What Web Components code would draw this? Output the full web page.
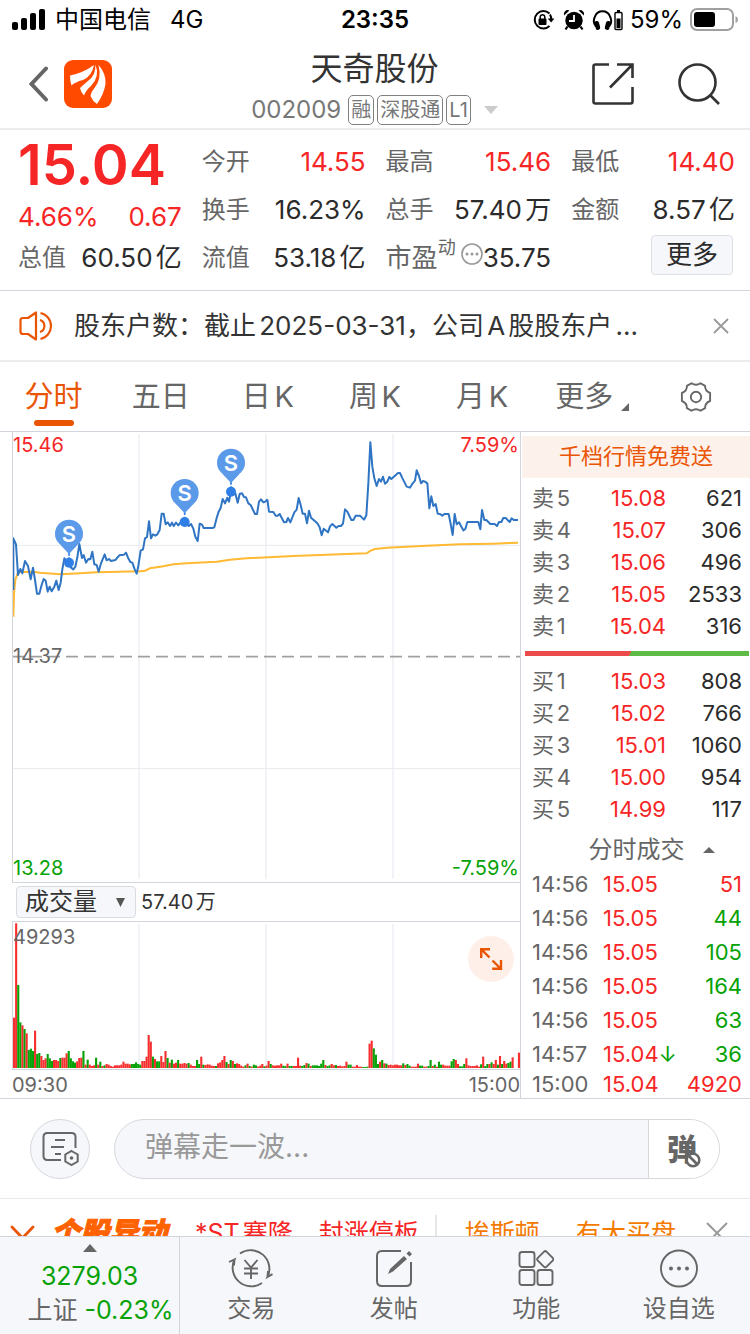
<!DOCTYPE html>
<html lang="zh-CN">
<head>
<meta charset="utf-8">
<meta name="viewport" content="width=device-width, initial-scale=1">
<title>天奇股份 002009</title>
<style>
  :root {
    --up: #f62626;
    --down: #06a206;
    --brand: #ea5504;
    --text: #2b2b2b;
    --muted: #666;
    --line: #d2d5db;
    --soft: #ececec;
    --panel: #f6f7fa;
  }
  body {
    margin: 0;
    height: 100vh;
    display: flex;
    flex-direction: column;
    overflow: hidden;
    background: #fff;
    color: var(--text);
    font-family: Inter, "Noto Sans CJK SC", sans-serif;
    text-autospace: normal;
  }
  main {
    flex: 1;
    min-height: 0;
    overflow: hidden;
  }
</style>
</head>
<body>
<status-bar time="23:35" carrier="中国电信" network="4G" battery="59%"></status-bar>
<main>
  <stock-header code="002009">天奇股份
    <stock-tag slot="tags">融</stock-tag>
    <stock-tag slot="tags">深股通</stock-tag>
    <stock-tag slot="tags">L1</stock-tag>
  </stock-header>
  <quote-panel price="15.04" percent="4.66%" change="0.67">
    <quote-item slot="c1" label="总值">60.50亿</quote-item>
    <quote-item slot="c2" label="今开" tone="up">14.55</quote-item>
    <quote-item slot="c2" label="换手">16.23%</quote-item>
    <quote-item slot="c2" label="流值">53.18亿</quote-item>
    <quote-item slot="c3" label="最高" tone="up">15.46</quote-item>
    <quote-item slot="c3" label="总手">57.40万</quote-item>
    <quote-item slot="c3" label="市盈" sup="动">35.75</quote-item>
    <quote-item slot="c4" label="最低" tone="up">14.40</quote-item>
    <quote-item slot="c4" label="金额">8.57亿</quote-item>
  </quote-panel>
  <notice-bar>股东户数：截止2025-03-31，公司A股股东户...</notice-bar>
  <period-tabs></period-tabs>
  <market-view>
    <time-chart slot="chart"></time-chart>
    <volume-chart slot="chart"></volume-chart>
    <order-book slot="side"></order-book>
    <trade-list slot="side"></trade-list>
  </market-view>
  <comment-bar></comment-bar>
  <mover-ticker>
    <mover-item tone="up" name="*ST赛隆">封涨停板</mover-item>
    <mover-item tone="warn" name="埃斯顿">有大买盘</mover-item>
  </mover-ticker>
</main>
<bottom-nav></bottom-nav>

<script>
const define = (name, html, setup) => {
    const template = document.createElement("template");
    template.innerHTML = html;
    customElements.define(name, class extends HTMLElement {
        connectedCallback() {
            if (this.shadowRoot) return;
            this.attachShadow({ mode: "open" });
            this.shadowRoot.appendChild(template.content.cloneNode(true));
            // [data-text="x"] is filled from the attribute x of the host
            this.shadowRoot.querySelectorAll("[data-text]").forEach((el) => {
                el.textContent = this.getAttribute(el.dataset.text) || "";
            });
            if (setup) setup(this, this.shadowRoot);
        }
    });
};

const BUTTON = `
  button {
    padding: 0;
    border: 0;
    background: none;
    color: inherit;
    font: inherit;
    cursor: pointer;
  }
  svg { display: block; }
`;

define("status-bar", /*html*/`
<style>
  :host {
    display: grid;
    grid-template-columns: 1fr auto 1fr;
    align-items: center;
    height: 40px;
    padding: 0 12px;
    color: #000;
    font-size: 24px;
    line-height: 28px;
    flex: none;
  }
  div { display: flex; align-items: center; }
  .left { gap: 9px; }
  .net { margin-left: 10px; }
  .right { justify-content: flex-end; gap: 7px; }
  svg { display: block; }
  b { font-weight: 600; }
</style>
<div class="left">
  <svg width="34" height="22" viewBox="0 0 34 22"><rect y="13" width="6" height="8" rx="2"/><rect x="9" y="9" width="6" height="12" rx="2"/><rect x="18" y="4" width="6" height="17" rx="2"/><rect x="27" width="6" height="21" rx="2"/></svg>
  <span data-text="carrier"></span>
  <span class="net" data-text="network"></span>
</div>
<b data-text="time"></b>
<div class="right">
  <svg width="24" height="22" viewBox="0 0 24 22" fill="none" stroke="#000" stroke-width="2"><path d="M17.500 4.500A8.700 8.700 0 1 0 17.500 17M18 5.500a8.700 8.700 0 0 1 1.200 5"/><path d="M15.800 9.500h6.600l-3.300 4z" fill="#000" stroke="none"/><rect x="6.500" y="9.500" width="8" height="6.500" rx="1" fill="#000" stroke="none"/><path d="M8.200 10V8a2.300 2.300 0 0 1 4.600 0v2" stroke-width="1.500"/></svg>
  <svg width="22" height="22" viewBox="0 0 22 22"><path d="M1 6.500A4 4 0 0 1 6.500 1.500zM21 6.500a4 4 0 0 0-5.500-5z"/><circle cx="11" cy="11.500" r="8.700"/><path d="M4.500 17.500l-2 3M17.500 17.500l2 3" stroke="#000" stroke-width="2.200"/><path d="M11 6v6H6" fill="none" stroke="#fff" stroke-width="1.800"/></svg>
  <svg width="31" height="22" viewBox="0 0 31 22"><path d="M4 17.500A9 9 0 0 1 3 7.500a8 8 0 0 1 15 0 9 9 0 0 1-1 10" fill="none" stroke="#000" stroke-width="2"/><rect x="3" y="12" width="4.500" height="9" rx="2" transform="rotate(-14 5 16)"/><rect x="13.500" y="12" width="4.500" height="9" rx="2" transform="rotate(14 16 16)"/><rect x="23" y="3.500" width="7" height="17" rx="1" fill="none" stroke="#000" stroke-width="1.400"/><path d="M25 1h3v2h-3zM24.500 9.500h4v9.500h-4z"/></svg>
  <span data-text="battery"></span>
  <svg width="48" height="24" viewBox="0 0 48 24"><rect x="1" y="1" width="42" height="21" rx="6" fill="none" stroke="#a0a0a0" stroke-width="2"/><rect x="4" y="4" width="21" height="15" rx="3"/><path d="M45.500 8v7q2.500-1 2.500-3.500T45.500 8z" fill="#a0a0a0"/></svg>
</div>
`);

define("stock-tag", /*html*/`
<style>
  :host {
    display: block;
    box-sizing: border-box;
    height: 30px;
    padding: 0 2px;
    border: 1px solid #808080;
    border-radius: 5px;
    font-size: 20px;
    line-height: 28px;
  }
</style>
<slot></slot>
`);

define("stock-header", /*html*/`
<style>
  ${BUTTON}
  :host {
    display: grid;
    grid-template-columns: 1fr auto 1fr;
    align-items: center;
    box-sizing: border-box;
    height: 90px;
    padding: 0 30px 0 29px;
    border-bottom: 2px solid var(--soft);
  }
  .left { display: flex; align-items: center; gap: 16px; }
  .right { display: flex; justify-content: flex-end; align-items: center; gap: 44px; }
  .mid { padding-top: 4px; text-align: center; }
  h1 { margin: 0; font-size: 32px; line-height: 48px; font-weight: 400; color: #333; }
  .sub {
    display: flex;
    align-items: center;
    gap: 3px;
    height: 34px;
    color: #777;
    font-size: 24px;
    line-height: 30px;
  }
  .sub > span { margin-right: 4px; }
  .sub svg { margin-left: 10px; }
</style>
<div class="left">
  <button aria-label="返回"><svg width="19" height="36" viewBox="0 0 19 36" fill="none" stroke="#666" stroke-width="4" stroke-linecap="round"><path d="M17 2.500L2.500 18 17 33.500"/></svg></button>
  <svg width="48" height="48" viewBox="0 0 48 48"><rect width="48" height="48" rx="9" fill="#ff4a00"/><g fill="#fff"><path d="M6 15.500Q19 13 30 5 28 16 19 20q-8 2-11.500 5.500Q6 21 6 15.500z"/><path d="M31.500 4.500Q32 15 24 21q-5 4-8 7 1 5 4 7.500Q22 30 27 26 36 17 31.500 4.500z"/><path d="M34.500 5Q38 19 30.500 28q-3 3-4 8 2 5 6.500 8 7-10 8.500-20Q42 13 34.500 5z"/></g></svg>
</div>
<div class="mid">
  <h1><slot></slot></h1>
  <div class="sub"><span data-text="code"></span><slot name="tags"></slot><svg width="14" height="8" viewBox="0 0 14 8"><path d="M0 0h14L7 8z" fill="#ccc"/></svg></div>
</div>
<div class="right">
  <button aria-label="分享"><svg width="42" height="42" viewBox="0 0 42 42" fill="none" stroke="#333" stroke-width="2.600"><path d="M17 1.500H3.500q-2 0-2 2v35q0 2 2 2h35q2 0 2-2V24M25 1.500h15.500V15M40 2L18 24.500"/></svg></button>
  <button aria-label="搜索"><svg width="42" height="42" viewBox="0 0 42 42" fill="none" stroke="#333" stroke-width="2.600"><circle cx="19.500" cy="19.500" r="18"/><path d="M32 32l9 9"/></svg></button>
</div>
`);

define("quote-item", /*html*/`
<style>
  :host {
    display: flex;
    justify-content: space-between;
    align-items: center;
    height: 48px;
    font-size: 26px;
    line-height: 48px;
    white-space: nowrap;
  }
  .label { color: var(--muted); font-size: 24px; }
  .label sup { font-size: 18px; line-height: 0; vertical-align: 13px; }
  .label svg { vertical-align: 2px; margin-left: 5px; }
  :host([sup]) .label { font-size: 26px; }
  :host([tone="up"]) .value { color: var(--up); }
  :host(:not([sup])) sup, :host(:not([sup])) svg { display: none; }
</style>
<span class="label"><span data-text="label"></span><sup data-text="sup"></sup><svg width="22" height="22" viewBox="0 0 22 22"><circle cx="11" cy="11" r="10" fill="none" stroke="#999" stroke-width="1.600"/><g fill="#999"><circle cx="6" cy="11" r="1.500"/><circle cx="11" cy="11" r="1.500"/><circle cx="16" cy="11" r="1.500"/></g></svg></span>
<span class="value"><slot></slot></span>
`);

define("quote-panel", /*html*/`
<style>
  ${BUTTON}
  :host {
    display: grid;
    grid-template-columns: repeat(4, 1fr);
    gap: 20px;
    padding: 8px 15px 8px 18px;
    border-bottom: 1px solid var(--line);
  }
  .big { color: var(--up); font-size: 56px; font-weight: 600; line-height: 54px; }
  .move {
    display: flex;
    justify-content: space-between;
    color: var(--up);
    font-size: 26px;
    line-height: 42px;
    height: 42px;
    margin-top: 4px;
  }
  ::slotted([slot="c1"]) { margin-top: -4px; }
  .more {
    display: block;
    box-sizing: border-box;
    width: 82px;
    height: 40px;
    margin: 1px 2px 0 auto;
    border: 1px solid #dcdfe4;
    border-radius: 4px;
    background: var(--panel);
    font-size: 26px;
    line-height: 38px;
  }
</style>
<div><div class="big" data-text="price"></div><div class="move"><span data-text="percent"></span><span data-text="change"></span></div><slot name="c1"></slot></div>
<div><slot name="c2"></slot></div>
<div><slot name="c3"></slot></div>
<div><slot name="c4"></slot><button class="more">更多</button></div>
`);

define("notice-bar", /*html*/`
<style>
  ${BUTTON}
  :host {
    display: flex;
    align-items: center;
    height: 69px;
    padding: 0 21px 0 19px;
    border-bottom: 2px solid var(--soft);
    font-size: 26px;
    color: #333;
  }
  p {
    flex: 1;
    min-width: 0;
    margin: 0 20px;
    overflow: hidden;
    white-space: nowrap;
    line-height: 40px;
  }
</style>
<svg width="35" height="30" viewBox="0 0 35 30" fill="none" stroke="#ea5504" stroke-width="2.200" stroke-linejoin="round"><path d="M17 1.500v27L9 23H4q-2.500 0-2.500-2.500v-11Q1.500 7 4 7h5z"/><path d="M21 9a6.300 6.300 0 0 1 0 12M21.500 2a13.300 13.300 0 0 1 0 26"/></svg>
<p><slot></slot></p>
<button aria-label="关闭"><svg width="16" height="16" viewBox="0 0 16 16" stroke="#999" stroke-width="1.800"><path d="M1 1l14 14M15 1L1 15"/></svg></button>
`);

define("period-tabs", /*html*/`
<style>
  ${BUTTON}
  :host {
    display: grid;
    grid-template-columns: repeat(7, 1fr);
    height: 69px;
    border-bottom: 1px solid var(--line);
    color: var(--muted);
    font-size: 29px;
    line-height: 40px;
  }
  button {
    display: flex;
    align-items: center;
    justify-content: center;
    position: relative;
    white-space: nowrap;
    line-height: inherit;
  }
  .on { color: var(--brand); }
  .on::after {
    content: "";
    position: absolute;
    left: calc(50% - 20px);
    bottom: 5px;
    width: 40px;
    height: 6px;
    border-radius: 3px;
    background: var(--brand);
  }
  .tri { align-self: flex-end; margin: 0 0 20px 8px; }
  .menu { padding-left: 6px; }
</style>
<button class="on">分时</button>
<button>五日</button>
<button>日K</button>
<button>周K</button>
<button>月K</button>
<button class="menu">更多<svg class="tri" width="8" height="8" viewBox="0 0 8 8"><path d="M8 0v8H0z" fill="#666"/></svg></button>
<button aria-label="设置"><svg width="32" height="30" viewBox="0 0 32 30" fill="none" stroke="#666" stroke-width="1.900" stroke-linejoin="round"><path d="M11.500 1.200q4.500 3.200 9 0l4.600 2.700q-.3 5 5 7.100v8q-5.300 2-5 7.100l-4.600 2.700q-4.500-3.200-9 0l-4.600-2.700q.3-5-5-7.100v-8q5.300-2 5-7.100z"/><circle cx="16" cy="15" r="5.200"/></svg></button>
`);

define("market-view", /*html*/`
<style>
  :host {
    display: grid;
    grid-template-columns: minmax(0, 1fr) 229px;
    border-bottom: 1px solid var(--line);
  }
  .chart { padding-left: 12px; border-right: 1px solid var(--line); }
</style>
<div class="chart"><slot name="chart"></slot></div>
<div><slot name="side"></slot></div>
`);

// drawing units are a third of a pixel
const PRICE_A = "40,690 40,535 48,553 54,645 61,627 67,640 75,603 84,618 92,658 99,623 105,660 111,701 118,701 124,678 131,657 137,662 143,695 149,680 155,694 163,680 169,662 176,690 182,668 187,628 193,595 199,602 207,610 213,623 220,628 226,620 232,592 238,552 246,594 251,585 258,608 265,597 271,598 277,575 283,613 290,615 296,635 303,610 314,583 320,601 327,597 333,603 346,600 358,586 372,584 378,578 384,593 391,606 397,608 403,625 410,641 415,618 422,572 429,568 435,535 441,531 447,484 453,535 459,523 466,527 472,523 479,510 485,461 491,461 497,493 503,487 510,498 516,488 521,498 528,488 535,496 541,488 554,487 566,498 573,492 580,506 586,530 593,543 599,491 606,494 611,504 637,504 643,502 650,474 656,455 662,444 668,417 675,430 682,413 687,425 693,395 706,400 713,428 719,402 726,400 732,411 738,412 745,430 752,435 765,462 771,462 777,425 783,418 790,427 797,424 802,418";
const PRICE_B = "22,418 27,455 40,456 47,467 53,467 59,462 72,487 79,486 84,474 91,487 103,457 110,449 116,414 122,435 128,461 135,461 141,490 147,452 153,473 160,479 172,490 179,502 185,526 191,506 204,517 210,499 217,492 229,503 236,498 243,498 249,491 255,448 262,455 274,480 280,480 287,467 300,467 312,479 319,466 325,370 331,247 337,320 343,355 350,378 357,357 363,365 369,350 375,371 382,365 388,351 394,357 414,339 420,339 426,352 440,380 450,383 458,370 465,362 470,331 477,348 483,370 489,363 495,365 502,370 508,445 514,409 520,438 527,432 533,461 540,462 547,467 553,462 566,462 572,492 578,525 584,462 590,493 597,487 610,511 616,507 622,486 655,486 661,508 666,450 673,480 679,480 691,492 704,492 711,498 717,486 724,486 730,474 737,474 749,486 755,475 761,480 774,480";
const AVERAGE = "40,770 42,700 46,660 52,642 60,636 100,635 120,638 180,643 240,640 290,637 420,634 435,632 450,625 490,619 520,613 560,610 650,605 690,599 740,595 880,588 1100,580 1112,572 1125,567 1160,563 1280,557 1380,553 1480,551 1554,548";
const SIGNALS = [[207, 608], [554, 486], [693, 395]];

define("time-chart", /*html*/`
<style>
  :host {
    display: block;
    position: relative;
    height: 450px;
    border-left: 1px solid var(--line);
    border-bottom: 1px solid var(--line);
    font-size: 20px;
    line-height: 24px;
  }
  svg { display: block; width: 100%; height: 100%; }
  span { position: absolute; }
  .up { color: var(--up); }
  .down { color: var(--down); }
  .top { top: 1px; }
  .bottom { bottom: 2px; }
  .mid { top: calc(50% - 13px); color: var(--muted); }
  .right { right: 1px; }
</style>
<svg viewBox="39 216 1521 1350" preserveAspectRatio="none" fill="none">
  <path d="M417 222V1556M798 222V1556M1179 222V1556" stroke="#f0f1f5" stroke-width="5"/>
  <path d="M39 556H1560M39 1226H1560" stroke="#e8eaee" stroke-width="3"/>
  <path d="M36 890H1560" stroke="#a0a0a0" stroke-width="5" stroke-dasharray="36 18"/>
  <polyline points="${AVERAGE}" stroke="#ffb932" stroke-width="6"/>
  <g stroke="#2f75c4" stroke-width="6" stroke-linejoin="round">
    <polyline points="${PRICE_A}"/>
    <polyline points="${PRICE_B}" transform="translate(780)"/>
  </g>
  <g class="signals"></g>
</svg>
<span class="up top">15.46</span>
<span class="up top right">7.59%</span>
<span class="mid">14.37</span>
<span class="down bottom">13.28</span>
<span class="down bottom right">-7.59%</span>
`, (host, root) => {
    root.querySelector(".signals").innerHTML = SIGNALS.map(([x, y]) => `
      <g transform="translate(${x} ${y})">
        <path d="M0 0V-40" stroke="#2f7fe6" stroke-width="5" stroke-dasharray="16 5"/>
        <path d="M-26-54L0-26 26-54z" fill="#5b99e9"/>
        <circle cy="-87" r="42" fill="#5b99e9"/>
        <circle r="15" fill="#2f7fe6"/>
        <text y="-63" text-anchor="middle" font-size="66" font-weight="600" fill="#fff">S</text>
      </g>`).join("");
});

// one bar for each minute: positive is a rise, negative a fall
const VOLUME = [
    151, 434, -249, -137, 128, -117, 104, -54, -58, -51, 112, -42, -45, 36, 24, 29, -42, -29, -21, 24,
    24, 21, -30, 31, 31, 44, -51, -29, -20, -16, 20, 30, 31, -51, 10, -25, 10, 6, 8, -31,
    10, -19, 6, -8, 12, 10, 6, 4, 8, 8, 8, 10, 19, 13, 13, 11, -12, -12, -17, -12,
    -10, 21, 21, 34, 99, 79, -34, 27, -20, -20, 36, 18, 51, -30, 16, -25, 13, 16, -24, 13,
    13, 15, 13, -15, 10, 6, 6, -24, -12, 34, -10, 9, 11, 10, 7, 6, -6, 14, 17, 24,
    36, -18, 12, -24, 21, -12, 14, 12, 7, 4, -8, 13, -6, 4, -10, -8, 4, 7, 12, -5,
    7, 21, -12, 8, 7, 8, 8, 13, -7, -6, 13, -6, -6, 6, 6, 31, 7, -6, -9, 15,
    -13, 6, -8, -8, -8, -6, -13, -24, 9, -6, -8, 12, 8, -9, 6, 7, 5, 6, 19, -10,
    -10, 4, 4, 9, 4, 4, -3, -3, -4, 73, 82, -59, -40, -12, 19, -24, 14, -13, 9, 10,
    8, 10, 10, 8, 8, -14, 9, -12, -7, 4, 4, 4, 13, -7, -7, 4, 4, -6, -24, 6,
    -10, 4, -19, -10, 10, 7, 7, 7, -20, -27, 24, 12, -5, -5, -12, 29, 8, 6, 6, 6,
    8, 4, -11, 34, -6, -12, 12, -17, 12, 24, -10, 36, -12, 21, 13, -15, -19, 32, 0, 0, 46
];

define("volume-chart", /*html*/`
<style>
  ${BUTTON}
  :host { display: block; font-size: 20px; color: var(--muted); }
  .bar {
    display: flex;
    align-items: center;
    gap: 5px;
    height: 38px;
    padding-left: 4px;
    border-bottom: 1px solid var(--line);
    color: #333;
    line-height: 28px;
  }
  .pick { position: relative; }
  select {
    appearance: none;
    display: block;
    box-sizing: border-box;
    width: 120px;
    height: 32px;
    padding: 0 0 0 8px;
    border: 1px solid #d8dbe1;
    border-radius: 4px;
    background: var(--panel);
    color: inherit;
    font: inherit;
    font-size: 24px;
    line-height: 30px;
  }
  .pick svg { position: absolute; right: 11px; top: 12px; pointer-events: none; }
  .plot {
    position: relative;
    height: 147px;
    border-left: 1px solid var(--line);
    border-bottom: 1px solid var(--line);
  }
  .plot > svg { width: 100%; height: 100%; }
  .plot > span { position: absolute; left: 0; top: 3px; line-height: 24px; }
  .expand {
    position: absolute;
    right: 6px;
    top: 14px;
    width: 46px;
    height: 46px;
    border-radius: 50%;
    background: #fef0e9;
    display: grid;
    place-items: center;
  }
  .axis { display: flex; justify-content: space-between; padding-top: 2px; line-height: 26px; }
</style>
<div class="bar">
  <div class="pick"><select aria-label="指标"><option>成交量</option><option>量比</option></select><svg width="9" height="9" viewBox="0 0 9 9"><path d="M0 0h9L4.500 9z" fill="#555"/></svg></div>
  <span>57.40万</span>
</div>
<div class="plot">
  <svg viewBox="39 186 1521 441" preserveAspectRatio="none">
    <path d="M417 192V624M798 192V624M1179 192V624" stroke="#f0f1f5" stroke-width="5"/>
    <g class="bars"></g>
  </svg>
  <span>49293</span>
  <button class="expand" aria-label="全屏"><svg width="24" height="24" viewBox="0 0 24 24" fill="none" stroke="#ea5504" stroke-width="2.400"><path d="M2.200 11V2.200H11M2.500 2.500l8 8M22 13v8.800h-8.800M21.500 21.500l-8-8"/></svg></button>
</div>
<div class="axis"><span>09:30</span><span>15:00</span></div>
`, (host, root) => {
    const step = 1521 / VOLUME.length;
    root.querySelector(".bars").innerHTML = VOLUME.map((v, i) =>
        `<rect x="${39 + i * step}" y="${624 - Math.abs(v)}" width="${step}" height="${Math.abs(v)}" fill="${v > 0 ? "#f62e2e" : "#06a206"}"/>`
    ).join("");
});

const TABLE = `
  table { width: 100%; border-collapse: collapse; table-layout: fixed; line-height: 26px; }
  td, th { padding: 0; font-weight: 400; text-align: right; white-space: nowrap; }
  th { text-align: left; color: var(--muted); }
`;
const SELL = [["卖5", "15.08", 621], ["卖4", "15.07", 306], ["卖3", "15.06", 496], ["卖2", "15.05", 2533], ["卖1", "15.04", 316]];
const BUY = [["买1", "15.03", 808], ["买2", "15.02", 766], ["买3", "15.01", 1060], ["买4", "15.00", 954], ["买5", "14.99", 117]];

define("order-book", /*html*/`
<style>
  ${BUTTON}
  ${TABLE}
  :host { display: block; padding-top: 4px; font-size: 22px; }
  .promo {
    display: block;
    width: calc(100% - 1px);
    height: 42px;
    margin-left: 1px;
    padding-bottom: 2px;
    background: #fdf1eb;
    color: var(--brand);
    line-height: 38px;
  }
  table { margin-top: 4px; }
  tr { height: 32px; }
  th { padding-left: 11px; }
  td:last-child { padding-right: 8px; }
  td:nth-child(2) { color: var(--up); }
  col:first-child { width: 64px; }
  col:last-child { width: 84px; }
  .ratio {
    height: 5px;
    margin: 9px 1px 9px 4px;
    background: linear-gradient(115deg, #ec4b4b 47%, #5ebb46 47%);
  }
</style>
<button class="promo">千档行情免费送</button>
<table class="sell"></table>
<div class="ratio"></div>
<table class="buy"></table>
`, (host, root) => {
    const rows = (list) => "<colgroup><col><col><col></colgroup>" + list.map(([name, price, count]) =>
        `<tr><th>${name}</th><td>${price}</td><td>${count}</td></tr>`).join("");
    root.querySelector(".sell").innerHTML = rows(SELL);
    root.querySelector(".buy").innerHTML = rows(BUY);
});

const TRADES = [
    ["14:56", "15.05", 51, "up"],
    ["14:56", "15.05", 44, "down"],
    ["14:56", "15.05", 105, "down"],
    ["14:56", "15.05", 164, "down"],
    ["14:56", "15.05", 63, "down"],
    ["14:57", "15.04", 36, "down", "↓"],
    ["15:00", "15.04", 4920, "up"]
];

define("trade-list", /*html*/`
<style>
  ${BUTTON}
  ${TABLE}
  :host { display: block; font-size: 22px; }
  .head {
    display: flex;
    align-items: center;
    justify-content: center;
    gap: 18px;
    width: 100%;
    height: 34px;
    margin-top: 8px;
    padding-left: 32px;
    color: var(--muted);
    font-size: 24px;
    line-height: 34px;
  }
  tr { height: 34px; }
  tr:last-child { height: 26px; }
  th { padding-left: 11px; }
  .price { text-align: left; color: var(--up); }
  .price i { font-style: normal; color: var(--down); }
  td:last-child { padding-right: 8px; }
  .up { color: var(--up); }
  .down { color: var(--down); }
  col:first-child { width: 82px; }
  col:last-child { width: 70px; }
</style>
<button class="head">分时成交<svg width="12" height="6" viewBox="0 0 12 6"><path d="M6 0l6 6H0z" fill="#666"/></svg></button>
<table></table>
`, (host, root) => {
    root.querySelector("table").innerHTML = "<colgroup><col><col><col></colgroup>" + TRADES.map(([time, price, count, tone, mark]) =>
        `<tr><th>${time}</th><td class="price">${price}${mark ? `<i>${mark}</i>` : ""}</td><td class="${tone}">${count}</td></tr>`).join("");
});

define("comment-bar", /*html*/`
<style>
  ${BUTTON}
  :host {
    display: flex;
    gap: 24px;
    padding: 20px 30px 19px;
    border-bottom: 1px solid #e8e9ec;
  }
  .set, .box {
    box-sizing: border-box;
    height: 60px;
    border: 1px solid #d6d8de;
    border-radius: 30px;
    background: var(--panel);
  }
  .set { width: 60px; display: grid; place-items: center; }
  .box { flex: 1; display: flex; overflow: hidden; }
  input {
    flex: 1;
    min-width: 0;
    padding: 0 0 4px 30px;
    border: 0;
    background: none;
    font: inherit;
    font-size: 28px;
    text-autospace: no-autospace;
    outline: none;
  }
  input::placeholder { color: #999; opacity: 1; }
  .mute {
    display: flex;
    align-items: center;
    justify-content: center;
    width: 71px;
    border-left: 1px solid #d6d8de;
    background: #fff;
    color: #666;
    font-size: 30px;
    font-weight: 900;
    line-height: 40px;
  }
  .mute svg { margin: 22px 0 0 -12px; }
</style>
<button class="set" aria-label="弹幕设置"><svg width="37" height="34" viewBox="0 0 37 34" fill="none" stroke="#666" stroke-width="2"><path d="M19 28H5.500q-4 0-4-4V5q0-4 4-4h24q4 0 4 4v11M13 8h10M9 15h13M13 22h6"/><path d="M29.500 19l6.200 3.500v7l-6.200 3.500-6.200-3.500v-7z"/><circle cx="29.500" cy="26" r="1.800" fill="#666" stroke="none"/></svg></button>
<div class="box">
  <input type="text" aria-label="弹幕" placeholder="弹幕走一波...">
  <button class="mute">弹<svg width="16" height="16" viewBox="0 0 16 16" fill="#fff" stroke="#666" stroke-width="2.600"><circle cx="8" cy="8" r="6.300"/><path d="M3.500 3.500l9 9"/></svg></button>
</div>
`);

define("mover-item", /*html*/`
<style>
  :host { display: flex; gap: 26px; color: var(--up); }
  :host([tone="warn"]) { gap: 36px; color: #f57a00; }
</style>
<span data-text="name"></span><span><slot></slot></span>
`);

define("mover-ticker", /*html*/`
<style>
  ${BUTTON}
  :host {
    display: flex;
    align-items: center;
    height: 68px;
    padding: 0 22px 0 10px;
    font-size: 25px;
    line-height: 36px;
    white-space: nowrap;
  }
  strong {
    margin: 0 28px 0 16px;
    font-size: 29px;
    font-weight: 900;
    font-style: italic;
    color: #ff6200;
    -webkit-text-stroke: 1px #ff6200;
  }
  .list { flex: 1; display: flex; gap: 46px; }
  ::slotted([tone="warn"]) { position: relative; }
  ::slotted([tone="warn"])::before {
    content: "";
    position: absolute;
    left: -30px;
    top: 0;
    width: 2px;
    height: 36px;
    background: #e6e6e6;
  }
</style>
<svg width="25" height="16" viewBox="0 0 25 16" fill="none" stroke="#ea5504" stroke-width="2.800" stroke-linecap="round"><path d="M2 2l10.500 11L23 2"/></svg>
<strong>个股异动</strong>
<div class="list"><slot></slot></div>
<button aria-label="关闭"><svg width="22" height="22" viewBox="0 0 22 22" stroke="#999" stroke-width="2"><path d="M1 1l20 20M21 1L1 21"/></svg></button>
`);

define("bottom-nav", /*html*/`
<style>
  :host {
    display: flex;
    flex: none;
    box-sizing: border-box;
    height: 98px;
    border-top: 1px solid var(--line);
    background: var(--panel);
    color: var(--muted);
    font-size: 24px;
  }
  a { color: inherit; text-decoration: none; text-align: center; white-space: nowrap; }
  svg { display: block; margin: 0 auto; }
  .index {
    box-sizing: border-box;
    width: 180px;
    padding-top: 7px;
    border-right: 1px solid var(--line);
    font-size: 25px;
    line-height: 34px;
  }
  .index svg { margin-bottom: 7px; }
  .index span, .index b { display: block; font-weight: 400; }
  .index b { margin-left: 22px; }
  .index em { font-style: normal; color: var(--down); }
  .item { flex: 1; padding-top: 12px; line-height: 40px; }
</style>
<a class="index" href="#index">
  <svg width="14" height="8" viewBox="0 0 14 8"><path d="M7 0l7 8H0z" fill="#666"/></svg>
  <span><em>3279.03</em></span>
  <b>上证 <em>-0.23%</em></b>
</a>
<a class="item" href="#trade"><svg width="46" height="40" viewBox="-1 0 46 40" fill="none" stroke="#666" stroke-width="1.900"><path d="M11 4.500A18.700 18.700 0 0 1 38.500 28l5-2.800M38.500 28l.5-6"/><path d="M33 34A18.700 18.700 0 0 1 5.500 10.500L0 13M5.500 10.500l-.500 6"/><path d="M15.500 11l6.500 7.500 6.500-7.500M22 18.500V30M15 19.500h14M15 24.500h14"/></svg>交易</a>
<a class="item" href="#post"><svg width="38" height="40" viewBox="0 0 38 40" fill="none" stroke="#666" stroke-width="2"><path d="M26 2H7Q2 2 2 7v25q0 5 5 5h24q5 0 5-5V13"/><path d="M31.500 4.500l2.500-2.500 3 3-2.500 2.500zM13 25l2-5L29 7l3 3-14 12.500z" fill="#666" stroke="none"/></svg>发帖</a>
<a class="item" href="#tools"><svg width="36" height="40" viewBox="0 0 36 40" fill="none" stroke="#666" stroke-width="1.900"><rect x="1.500" y="3" width="15" height="15" rx="2.500"/><rect x="1.500" y="21" width="15" height="15" rx="2.500"/><rect x="19.500" y="21" width="15" height="15" rx="2.500"/><rect x="21" y="4" width="12.500" height="12.500" rx="2" transform="rotate(45 27.250 10.250)"/></svg>功能</a>
<a class="item" href="#watch"><svg width="40" height="40" viewBox="0 0 40 40"><circle cx="20" cy="19.500" r="18" fill="none" stroke="#666" stroke-width="1.900"/><g fill="#666"><circle cx="12" cy="19.500" r="2"/><circle cx="20" cy="19.500" r="2"/><circle cx="28" cy="19.500" r="2"/></g></svg>设自选</a>
`);
</script>
</body>
</html>
